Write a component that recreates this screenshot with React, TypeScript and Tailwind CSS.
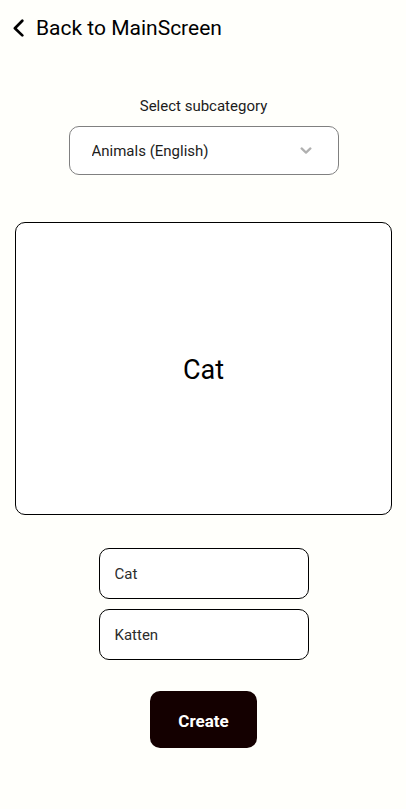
import { useState } from "react";

export default function App() {
  const [front, setFront] = useState("Cat");
  const [back, setBack] = useState("Katten");

  return (
    <div className="flex min-h-screen flex-col items-center bg-[#fffffb] font-['Roboto',sans-serif] text-black">
      <header className="flex h-14 w-full items-center px-3">
        <button type="button" className="flex items-center gap-3 text-[21px] leading-6">
          <svg className="h-5 w-3" viewBox="0 0 12 20" fill="none" stroke="currentColor" strokeWidth="2.7" strokeLinecap="round" strokeLinejoin="round" aria-hidden="true">
            <path d="M10.3 2.8 2.9 10.2l7.4 7.2" />
          </svg>
          Back to MainScreen
        </button>
      </header>

      <main className="flex w-full flex-col items-center pt-10 pr-3.5 pl-[15px]">
        <label htmlFor="subcategory" className="text-[15px] leading-5 text-[#1c1c1c]">
          Select subcategory
        </label>
        <div className="relative mt-2.5 w-[270px]">
          <select
            id="subcategory"
            className="h-[49px] w-full appearance-none rounded-[10px] border border-[#808080] bg-white px-[22px] pt-0.5 text-[15px] text-[#1c1c1c]"
          >
            <option>Animals (English)</option>
          </select>
          <svg
            className="pointer-events-none absolute top-5 right-[27px] h-2 w-3"
            viewBox="0 0 12 8"
            fill="none"
            stroke="#b0b0b0"
            strokeWidth="2.2"
            strokeLinecap="round"
            strokeLinejoin="round"
            aria-hidden="true"
          >
            <path d="m1.6 2.4 4.4 4.2 4.4-4.2" />
          </svg>
        </div>

        <section className="mt-[47px] flex h-[293px] w-full items-center justify-center rounded-[10px] border border-black bg-white pt-1 text-[27px]">
          {front}
        </section>

        <form className="mt-[33px] flex flex-col items-center" onSubmit={(e) => e.preventDefault()}>
          <input
            aria-label="Front of card"
            className="h-[51px] w-[210px] rounded-[10px] border border-black bg-white px-[15px] text-[15px] text-[#2c2c2c]"
            value={front}
            onChange={(e) => setFront(e.target.value)}
          />
          <input
            aria-label="Back of card"
            className="mt-2.5 h-[51px] w-[210px] rounded-[10px] border border-black bg-white px-[15px] text-[15px] text-[#2c2c2c]"
            value={back}
            onChange={(e) => setBack(e.target.value)}
          />
          <button type="submit" className="mt-[31px] h-[57px] w-[107px] rounded-[10px] bg-[#140000] pt-1 text-[17px] font-bold text-white">
            Create
          </button>
        </form>
      </main>
    </div>
  );
}
